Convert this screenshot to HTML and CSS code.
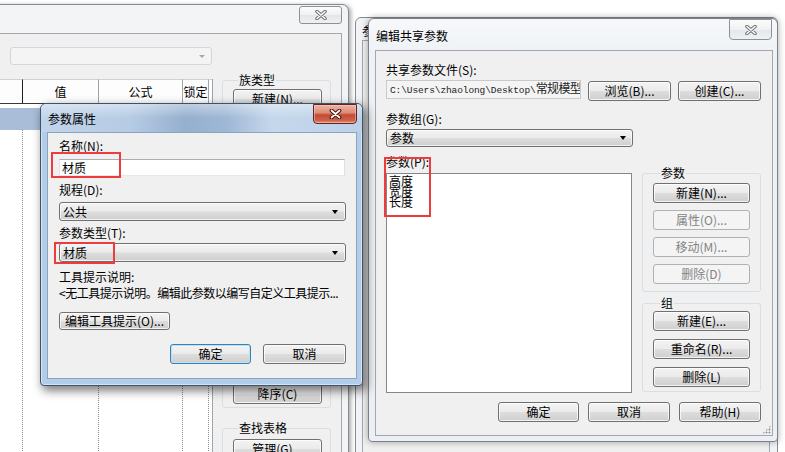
FILE: index.html
```html
<!DOCTYPE html>
<html lang="zh-CN">
<head>
<meta charset="utf-8">
<title>编辑共享参数</title>
<link rel="stylesheet" href="styles.css">
</head>
<body>
<main class="desktop">

  <!-- Back window: family types -->
  <section class="win win-a">
    <header class="titlebar">
      <span class="title"></span>
      <button class="close" type="button" aria-label="关闭">
        <svg width="12" height="10" viewBox="0 0 12 10"><path class="x-out" d="M2 1.5L10 8.5M10 1.5L2 8.5"/><path class="x-in" d="M2 1.5L10 8.5M10 1.5L2 8.5"/></svg>
      </button>
    </header>
    <div class="client client-a">
      <div class="combo combo-off"><span></span><i class="arrow"></i></div>
      <div class="a-main">
        <div class="grid">
          <div class="gh gh-first"></div>
          <div class="gh">值</div>
          <div class="gh">公式</div>
          <div class="gh">锁定</div>
          <div class="gh gh-end"></div>
          <div class="gsel"></div>
          <div class="gc"></div><div class="gc"></div><div class="gc"></div><div class="gc"></div><div class="gc gc-end"></div>
        </div>
        <div class="a-side">
          <fieldset class="grp">
            <legend>族类型</legend>
            <div class="stack">
              <button class="btn btn-a" type="button">新建(N)...</button>
              <button class="btn btn-a" type="button">重命名(A)...</button>
              <button class="btn btn-a" type="button">删除(E)</button>
            </div>
          </fieldset>
          <fieldset class="grp">
            <legend>参数</legend>
            <div class="stack">
              <button class="btn btn-a" type="button">添加(D)...</button>
              <button class="btn btn-a" type="button">修改(M)...</button>
              <button class="btn btn-a" type="button">删除(V)</button>
              <button class="btn btn-a" type="button">上移(U)</button>
              <button class="btn btn-a" type="button">下移(W)</button>
            </div>
          </fieldset>
          <fieldset class="grp">
            <legend>排序顺序</legend>
            <div class="stack">
              <button class="btn btn-a" type="button">升序(S)</button>
              <button class="btn btn-a" type="button">降序(C)</button>
            </div>
          </fieldset>
          <fieldset class="grp grp-lookup">
            <legend>查找表格</legend>
            <div class="stack">
              <button class="btn btn-a" type="button">管理(G)...</button>
            </div>
          </fieldset>
        </div>
      </div>
    </div>
  </section>

  <!-- Window behind the shared parameter editor -->
  <section class="win win-c">
    <header class="titlebar"><span class="title">参数</span></header>
    <div class="client"></div>
  </section>

  <!-- Edit shared parameters -->
  <section class="win win-b">
    <header class="titlebar">
      <span class="title">编辑共享参数</span>
      <button class="close" type="button" aria-label="关闭">
        <svg width="12" height="10" viewBox="0 0 12 10"><path class="x-out" d="M2 1.5L10 8.5M10 1.5L2 8.5"/><path class="x-in" d="M2 1.5L10 8.5M10 1.5L2 8.5"/></svg>
      </button>
    </header>
    <div class="client client-b">
      <div class="lbl">共享参数文件(S):</div>
      <div class="file-row">
        <div class="pathbox"><span class="path">C:\Users\zhaolong\Desktop\<span class="cjk">常规模型</span></span></div>
        <button class="btn btn-b" type="button">浏览(B)...</button>
        <button class="btn btn-b" type="button">创建(C)...</button>
      </div>
      <div class="lbl lbl-group">参数组(G):</div>
      <div class="combo cb-b"><span>参数</span><i class="arrow"></i></div>
      <div class="b-main">
        <div class="b-left">
          <div class="lbl">参数(P):</div>
          <ul class="list">
            <li>高度</li>
            <li>宽度</li>
            <li>长度</li>
          </ul>
        </div>
        <div class="b-right">
          <fieldset class="grp grp-b">
            <legend>参数</legend>
            <div class="stack">
              <button class="btn btn-bs" type="button">新建(N)...</button>
              <button class="btn btn-bs" type="button" disabled>属性(O)...</button>
              <button class="btn btn-bs" type="button" disabled>移动(M)...</button>
              <button class="btn btn-bs" type="button" disabled>删除(D)</button>
            </div>
          </fieldset>
          <fieldset class="grp grp-b grp-zu">
            <legend>组</legend>
            <div class="stack">
              <button class="btn btn-bs" type="button">新建(E)...</button>
              <button class="btn btn-bs" type="button">重命名(R)...</button>
              <button class="btn btn-bs" type="button">删除(L)</button>
            </div>
          </fieldset>
        </div>
      </div>
      <div class="actions actions-b">
        <button class="btn btn-ok" type="button">确定</button>
        <button class="btn btn-w82" type="button">取消</button>
        <button class="btn btn-w82" type="button">帮助(H)</button>
      </div>
      <i class="grip"></i>
    </div>
  </section>

  <!-- Active dialog: parameter properties -->
  <section class="win win-d">
    <header class="titlebar">
      <span class="title">参数属性</span>
      <button class="close close-red" type="button" aria-label="关闭">
        <svg width="13" height="10" viewBox="0 0 13 10"><path class="x-out" d="M2.5 1.5L10.5 8.5M10.5 1.5L2.5 8.5"/><path class="x-in" d="M2.5 1.5L10.5 8.5M10.5 1.5L2.5 8.5"/></svg>
      </button>
    </header>
    <div class="client client-d">
      <div class="lbl">名称(N):</div>
      <div class="textbox">材质</div>
      <div class="lbl lbl-disc">规程(D):</div>
      <div class="combo cb-d cb-disc"><span>公共</span><i class="arrow"></i></div>
      <div class="lbl lbl-type">参数类型(T):</div>
      <div class="combo cb-d cb-type"><span>材质</span><i class="arrow"></i></div>
      <div class="lbl lbl-tip">工具提示说明:</div>
      <div class="hint">&lt;无工具提示说明。编辑此参数以编写自定义工具提示...</div>
      <button class="btn btn-tip" type="button">编辑工具提示(O)...</button>
      <div class="actions actions-d">
        <button class="btn btn-default btn-ok" type="button">确定</button>
        <button class="btn btn-cancel" type="button">取消</button>
      </div>
    </div>
  </section>

  <!-- red annotation boxes -->
  <i class="mark mark-name"></i>
  <i class="mark mark-type"></i>
  <i class="mark mark-list"></i>

</main>
</body>
</html>
```

FILE: styles.css
```css
* { box-sizing: border-box; }
html, body { margin: 0; padding: 0; }
body {
  width: 785px; height: 452px; overflow: hidden; background: #fff;
  font-family: "Noto Sans CJK SC", "Noto Sans", sans-serif;
  font-size: 12px; line-height: 14px; color: #000;
}
button { font: inherit; color: inherit; margin: 0; padding: 0; }
fieldset { margin: 0; min-width: 0; }
ul { margin: 0; padding: 0; list-style: none; }

.desktop { position: relative; width: 785px; height: 452px; overflow: hidden; }

/* ---------- window chrome ---------- */
.win {
  position: absolute; display: flex; flex-direction: column;
  border: 1px solid #858a90; border-radius: 6px 6px 4px 4px;
}
.titlebar { flex: none; display: flex; justify-content: space-between; align-items: flex-start; }
.title { white-space: nowrap; }
.client { flex: 1; min-height: 0; border: 1px solid #a3a8ae; background: #f0f0f0; }

.close {
  display: flex; align-items: center; justify-content: center;
  border: 1px solid #8d9197; border-radius: 3px;
  background: linear-gradient(#fcfcfc, #f0f1f3 50%, #e4e6e9 51%, #eef0f2);
}
.close svg { display: block; }
.x-out { fill: none; stroke: #70757b; stroke-width: 3.6; stroke-linecap: round; }
.x-in { fill: none; stroke: #fff; stroke-width: 1.5; stroke-linecap: round; }

.close-red {
  border-color: #5a2820; border-radius: 0 0 4px 4px;
  background: linear-gradient(#efb3a4 0%, #de8d79 42%, #c54b33 55%, #cf5f47 85%, #e0977f 100%);
  box-shadow: inset 0 0 0 1px rgba(255, 215, 205, .45);
}
.close-red .x-out { stroke: #43180f; stroke-width: 3.8; }
.close-red .x-in { stroke-width: 1.7; }

/* ---------- common controls ---------- */
.btn {
  display: flex; align-items: center; justify-content: center; white-space: nowrap;
  height: 20px; border: 1px solid #707070; border-radius: 3px;
  background: linear-gradient(#f3f3f3 0%, #ebebeb 48%, #dddddd 52%, #cfcfcf 100%);
  box-shadow: inset 0 0 0 1px rgba(255, 255, 255, .75);
}
.btn:disabled {
  border-color: #adb2b5; background: #f4f4f4; color: #838383; box-shadow: none;
}
.btn-default { border-color: #3c7fb1; box-shadow: inset 0 0 0 1px #b9e2f6; }

.combo {
  display: flex; align-items: center; justify-content: space-between;
  padding: 0 6px 0 3px; border: 1px solid #707070; border-radius: 3px;
  background: linear-gradient(#f3f3f3 0%, #ebebeb 48%, #dddddd 52%, #cfcfcf 100%);
  box-shadow: inset 0 0 0 1px rgba(255, 255, 255, .7);
  white-space: nowrap;
}
.arrow {
  width: 0; height: 0;
  border-left: 3.5px solid transparent; border-right: 3.5px solid transparent;
  border-top: 4px solid #000;
}

.grp { border: 1px solid #d5dfe5; border-radius: 3px; padding: 2px 8px 3px 10px; }
.grp legend { padding: 0 1px; margin-left: 5px; line-height: 14px; }
.stack { display: flex; flex-direction: column; gap: 7px; }

.lbl { white-space: nowrap; }
.actions { display: flex; justify-content: flex-end; }

/* ---------- window A (family types, back) ---------- */
.win-a {
  left: -8px; top: 4px; width: 357px; height: 480px;
  border-radius: 0 7px 0 0; background: #f3f4f6;
  box-shadow: 2px 1px 4px rgba(0, 0, 0, .35);
}
.win-a .titlebar { height: 28px; padding: 1px 6px 0 8px; }
.win-a .close { width: 43px; height: 18px; }
.win-a .client { margin: 0 6px; }
.client-a { display: flex; flex-direction: column; padding-top: 13px; }

.combo-off {
  width: 202px; height: 18px; margin-left: 10px; padding-right: 6px;
  border-color: #d3d6da; background: #f4f4f4; box-shadow: none;
}
.combo-off .arrow {
  border-left-width: 3px; border-right-width: 3px; border-top: 3px solid #a5a9ad;
}

.a-main { display: flex; align-items: flex-start; margin-top: 8px; }
.grid {
  display: grid; grid-template-columns: 23px 76px 84px 26px 3px;
  grid-template-rows: 25px auto 1fr;
  width: 213px; height: 400px; margin-top: 6px;
  border-right: 1px solid #9da3a9; background: #fff;
}
.gh {
  display: flex; align-items: center; justify-content: center; white-space: nowrap;
  border-top: 1px solid #cfd3d7; border-bottom: 1px solid #3a3a3a; border-right: 1px solid #a3a3a3;
  background: #fdfdfd;
}
.gh-first { border-right-color: #1e1e1e; }
.gh-end { border-right: none; }
.gsel { grid-column: 1 / -1; height: 22px; margin-top: 4px; background: #a9bdd8; }
.gc { border-right: 1px dotted #8c8c8c; }
.gc-end { border-right: none; }

.a-side { display: flex; flex-direction: column; gap: 13px; width: 109px; margin-left: 9px; }
.btn-a { width: 89px; }
.grp-lookup { padding-top: 4px; }

/* ---------- window C (behind B) ---------- */
.win-c { left: 355px; top: 17px; width: 423px; height: 500px; background: #f1f3f6; }
.win-c .titlebar { height: 22px; padding: 6px 0 0 6px; }
.win-c .client { margin: 0 7px 0 6px; }

/* ---------- window B (edit shared parameters) ---------- */
.win-b {
  left: 368px; top: 18px; width: 410px; height: 424px;
  border-color: #7d8288;
  background: linear-gradient(#f6f8fa, #eef1f5 40px, #eceff3);
  box-shadow: 0 0 7px rgba(0, 0, 0, .35);
}
.win-b .titlebar { height: 31px; padding: 0 5px 0 7px; }
.win-b .title { margin-top: 10px; }
.win-b .close { width: 43px; height: 21px; border-radius: 0 0 4px 4px; }
.win-b .client { margin: 0 4px 5px 6px; }
.client-b { position: relative; padding: 12px 11px 0 10px; }

.file-row { display: flex; align-items: flex-start; gap: 7px; height: 21px; margin-top: 3px; }
.pathbox {
  display: flex; align-items: center; width: 195px; height: 19px; padding-left: 3px;
  overflow: hidden; white-space: nowrap;
  border: 1px solid #c6cacf; background: #f4f4f4;
}
.path {
  font-family: "Liberation Mono", monospace; font-size: 9.5px; color: #222;
  letter-spacing: -0.1px;
}
.path .cjk { font-family: "Noto Sans CJK SC", sans-serif; font-size: 12px; letter-spacing: -0.6px; }
.btn-b { width: 83px; margin-top: 1px; }

.lbl-group { margin-top: 11px; }
.cb-b { width: 247px; height: 18px; margin-top: 3px; }

.b-main { display: flex; margin-top: 8px; }
.b-left { width: 247px; }
.list {
  height: 220px; margin-top: 4px; padding: 2px 2px;
  border: 1px solid #828790; background: #fff;
}
.list li { line-height: 10.5px; }
.b-right { width: 119px; margin-left: 10px; padding-top: 11px; }
.grp-b { padding: 3px 10px 7px 10px; }
.grp-b legend { margin-left: 7px; }
.grp-zu { margin-top: 4px; padding: 1px 10px 4px 10px; }
.grp-zu .stack { gap: 8px; }
.btn-bs { width: 97px; }

.actions-b { gap: 9px; margin-top: 9px; }
.btn-ok { width: 81px; }
.btn-w82 { width: 82px; }

.grip {
  position: absolute; right: 1px; bottom: 1px; width: 9px; height: 9px;
  background-image: radial-gradient(circle, #8f959b 0.9px, transparent 1.1px);
  background-size: 3px 3px;
  clip-path: polygon(100% 0, 100% 100%, 0 100%);
}

/* ---------- window D (parameter properties, active) ---------- */
.win-d {
  left: 40px; top: 103px; width: 323px; height: 283px;
  border-color: #3e5268; background: #b3cce8;
  box-shadow: inset 0 0 0 1px rgba(255, 255, 255, .45), 3px 4px 10px 1px rgba(0, 0, 0, .5);
}
.win-d .titlebar {
  height: 28px; padding: 0 5px 0 7px; border-radius: 5px 5px 0 0;
  background:
    linear-gradient(180deg, rgba(255, 255, 255, .4), rgba(255, 255, 255, 0) 14px),
    linear-gradient(90deg, #c0d4ea 0%, #b6cbe4 28%, #95afcf 45%, #9fb8d6 58%, #c5d7eb 72%, #bcd1e9 100%);
}
.win-d .title { margin-top: 8px; }
.win-d .close { width: 44px; height: 20px; }
.win-d .client { margin: 0 5px 6px 6px; border-color: #8aa3be; }
.client-d { display: flex; flex-direction: column; align-items: flex-start; padding: 6px 10px 0 11px; }

.textbox {
  display: flex; align-items: center; width: 286px; height: 17px; margin-top: 6px; padding-left: 2px;
  border: 1px solid; border-color: #abadb3 #dbdfe6 #e3e9ef #e2e3ea; background: #fff;
}
.lbl-disc { margin-top: 7px; }
.cb-d { width: 287px; height: 19px; padding-right: 7px; }
.cb-disc { margin-top: 5px; }
.lbl-type { margin-top: 5px; }
.cb-type { margin-top: 3px; }
.lbl-tip { margin-top: 8px; }
.hint { margin-top: 2px; white-space: nowrap; letter-spacing: -0.5px; }
.btn-tip { width: 111px; height: 18px; margin-top: 12px; }
.actions-d { align-self: stretch; gap: 12px; margin-top: 14px; }
.btn-cancel { width: 83px; }

/* ---------- red annotation boxes ---------- */
.mark { position: absolute; border: 2px solid #ee3b3b; pointer-events: none; }
.mark-name { left: 51px; top: 152px; width: 70px; height: 26px; }
.mark-type { left: 54px; top: 242px; width: 61px; height: 22px; }
.mark-list { left: 384px; top: 157px; width: 47px; height: 60px; }
```
